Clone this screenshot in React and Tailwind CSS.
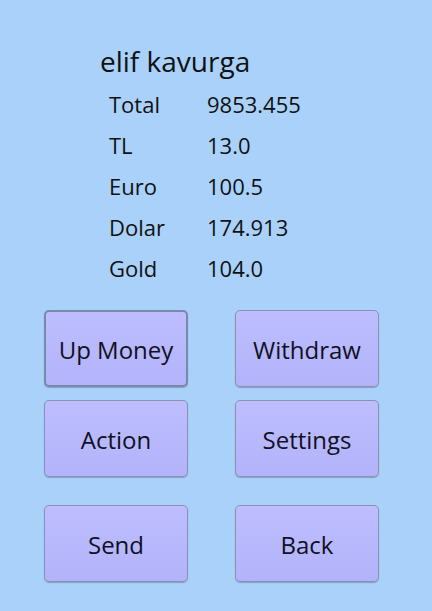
import React from "react";

const rows = [
  ["Total", "9853.455"],
  ["TL", "13.0"],
  ["Euro", "100.5"],
  ["Dolar", "174.913"],
  ["Gold", "104.0"],
];

function Btn({ label, focused }) {
  return (
    <button
      className={
        "w-[144px] h-[77px] pt-[3px] rounded-[5px] bg-gradient-to-b from-[#bdbdff] to-[#b3b3fb] text-[24px] text-[#111122] shadow-[0_1px_1px_rgba(60,70,110,0.35)] " +
        (focused ? "border-2 border-[#7a88aa]" : "border border-[#8a92ae]")
      }
      style={{ fontFamily: '"Open Sans", "Noto Sans", sans-serif' }}
    >
      {label}
    </button>
  );
}

export default function App() {
  return (
    <div
      className="w-[432px] h-[611px] bg-[#a9d1fa] text-[#111] overflow-hidden"
      style={{ fontFamily: '"Open Sans", "Noto Sans", sans-serif' }}
    >
      <div className="pt-[43px] pl-[100px] text-[28px] leading-[36px]">elif kavurga</div>
      <div className="pl-[109px] mt-[5px]">
        {rows.map(([k, v]) => (
          <div key={k} className="flex text-[22px] leading-[41px]">
            <div className="w-[98px]">{k}</div>
            <div>{v}</div>
          </div>
        ))}
      </div>
      <div className="pl-[44px] mt-[21px] flex flex-col">
        <div className="flex gap-[47px]">
          <Btn label="Up Money" focused />
          <Btn label="Withdraw" />
        </div>
        <div className="flex gap-[47px] mt-[13px]">
          <Btn label="Action" />
          <Btn label="Settings" />
        </div>
        <div className="flex gap-[47px] mt-[28px]">
          <Btn label="Send" />
          <Btn label="Back" />
        </div>
      </div>
    </div>
  );
}
